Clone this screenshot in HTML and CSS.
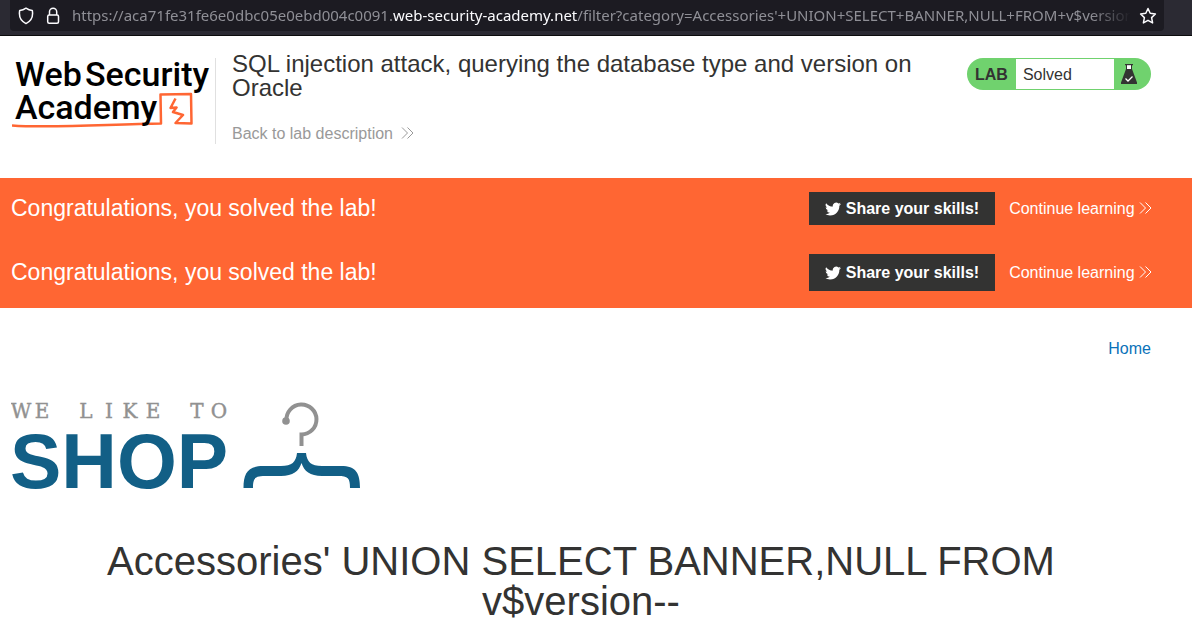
FILE: index.html
```html
<!DOCTYPE html>
<html lang="en">
<head>
<meta charset="utf-8">
<title>SQL injection attack, querying the database type and version on Oracle</title>
<link rel="stylesheet" href="styles.css">
</head>
<body>
<div class="toolbar">
  <div class="urlbar">
    <button class="icon-button" aria-label="Tracking protection"><svg width="16" height="18" viewBox="0 0 16 18"><path d="M8 1.2C10 2.6 12 3.3 14.3 3.5C15.2 8.6 14 13.8 8 16.6C2 13.8.8 8.600 1.700 3.500C4 3.300 6 2.600 8 1.200Z"/></svg></button>
    <button class="icon-button" aria-label="Site information"><svg width="14" height="18" viewBox="0 0 14 18"><rect x="1.700" y="8" width="10.800" height="8.300" rx="1.500"/><path d="M3.500 8V4.800a3.600 3.600 0 0 1 7.200 0V8"/></svg></button>
    <div class="address">https://aca71fe31fe6e0dbc05e0ebd004c0091.<span class="domain">web-security-academy.net</span>/filter?category=Accessories'+UNION+SELECT+BANNER,NULL+FROM+v$version--</div>
    <button class="icon-button" aria-label="Bookmark this page"><svg width="18" height="18" viewBox="0 0 18 18"><path d="M9 1.500L11.200 6.300L16.400 7L12.600 10.600L13.600 15.900L9 13.300L4.400 15.900L5.400 10.600L1.600 7L6.800 6.300Z"/></svg></button>
  </div>
</div>

<header class="lab-header">
  <a class="academy" href="#" aria-label="Web Security Academy">
    <svg width="203" height="86" viewBox="0 0 203 86">
      <path class="scribble" d="M0 67.500C40 70.500 100 66 149 65.500L148.500 36.500L179 36L179.500 65.500L163.500 65L171 57L161 54L164.500 49.500L158.500 50L163.500 40.500"/>
      <text class="wordmark" x="3" y="28">Web</text>
      <text class="wordmark" x="73" y="28">Security</text>
      <text class="wordmark" x="3" y="61">Academy</text>
    </svg>
  </a>
  <div class="lab-title">
    <h2>SQL injection attack, querying the database type and version on Oracle</h2>
    <a class="back" href="#">Back to lab description <svg class="chevrons" width="13" height="12" viewBox="0 0 13 12"><path d="M1 .5L6.500 6L1 11.500M6.500 .5L12 6L6.500 11.500"/></svg></a>
  </div>
  <div class="status">
    <span class="status-label">LAB</span>
    <span class="status-value">Solved</span>
    <svg class="flask" width="18" height="22" viewBox="0 0 18 22"><path fill="#333332" d="M5 1h8v1.200H12V6l5 13.500V21H1v-1.500L6 6V2.200H5z"/><path fill="#fff" d="M7 2.200h4V6H7z"/><path fill="none" stroke="#fff" stroke-width="1.300" d="M5.500 15.500l2.500 2.500 4.500-4.500"/></svg>
  </div>
</header>

<main>
  <section class="banner">
    <div class="notice">
      <p>Congratulations, you solved the lab!</p>
      <button class="share"><svg width="16" height="16" viewBox="0 0 24 24"><path d="M24 4.600a10 10 0 0 1-2.800.8A5 5 0 0 0 23.300 2.700a10 10 0 0 1-3.100 1.200A4.920 4.920 0 0 0 11.800 8.400 14 14 0 0 1 1.700 3.200a4.920 4.920 0 0 0 1.500 6.600 4.900 4.900 0 0 1-2.200-.6v.1a4.920 4.920 0 0 0 3.900 4.800 5 5 0 0 1-2.200.1 4.920 4.920 0 0 0 4.600 3.400A9.870 9.870 0 0 1 0 19.600a14 14 0 0 0 7.500 2.200c9.100 0 14-7.500 14-14v-.6A10 10 0 0 0 24 4.600z"/></svg>Share your skills!</button>
      <a class="continue" href="#">Continue learning <svg class="chevrons" width="13" height="12" viewBox="0 0 13 12"><path d="M1 .5L6.500 6L1 11.500M6.500 .5L12 6L6.500 11.500"/></svg></a>
    </div>
    <div class="notice">
      <p>Congratulations, you solved the lab!</p>
      <button class="share tall"><svg width="16" height="16" viewBox="0 0 24 24"><path d="M24 4.600a10 10 0 0 1-2.800.8A5 5 0 0 0 23.300 2.700a10 10 0 0 1-3.100 1.200A4.920 4.920 0 0 0 11.800 8.400 14 14 0 0 1 1.700 3.200a4.920 4.920 0 0 0 1.500 6.600 4.900 4.900 0 0 1-2.200-.6v.1a4.920 4.920 0 0 0 3.900 4.800 5 5 0 0 1-2.200.1 4.920 4.920 0 0 0 4.600 3.400A9.870 9.870 0 0 1 0 19.600a14 14 0 0 0 7.500 2.200c9.100 0 14-7.500 14-14v-.6A10 10 0 0 0 24 4.600z"/></svg>Share your skills!</button>
      <a class="continue" href="#">Continue learning <svg class="chevrons" width="13" height="12" viewBox="0 0 13 12"><path d="M1 .5L6.500 6L1 11.500M6.500 .5L12 6L6.500 11.500"/></svg></a>
    </div>
  </section>

  <div class="page">
    <nav><a href="#">Home</a></nav>
    <svg class="shop-logo" width="352" height="92" viewBox="0 0 352 92">
      <text class="tagline" y="18" x="10 31 53 75 98 119 142 164 186 208">WE LIKE TO</text>
      <text class="shop" x="-1" y="88">SHOP</text>
      <path class="hook" d="M275.500 20.500A15 15 0 1 1 290.500 34.500V46"/>
      <circle class="knob" cx="275" cy="21" r="3.800"/>
      <path class="hanger" d="M286 53H295C296 62 300 66 311 66H330C345 66 349 73 349 88H339C339 78 337 76 327 76H311C299 76 293 71 290.500 63C288 71 282 76 270 76H254C244 76 242 78 242 88H232.500C232.500 73 237 66 252 66H270C281 66 285 62 286 53Z"/>
    </svg>
    <h1>Accessories' UNION SELECT BANNER,NULL FROM v$version--</h1>
  </div>
</main>
</body>
</html>
```
FILE: styles.css
```css
* { box-sizing: border-box; }

body {
  margin: 0;
  background: #fff;
  color: #333332;
  font-family: "Liberation Sans", Arial, sans-serif;
  font-size: 16px;
}

h1, h2, p { margin: 0; font-weight: 400; }
a { color: inherit; text-decoration: none; }
button { border: 0; font: inherit; cursor: pointer; }

.toolbar {
  height: 36px;
  padding: 0 28px 4px 10px;
  background: #2b2a33;
  border-bottom: 1px solid #0c0c0d;
}

.urlbar {
  display: flex;
  align-items: center;
  height: 31px;
  padding: 0 7px 0 8px;
  border-radius: 0 0 4px 4px;
  background: #1c1b22;
}

.icon-button {
  display: flex;
  padding: 0;
  margin-right: 12px;
  background: none;
}
.icon-button:last-child { margin: 0 0 0 8px; }
.icon-button svg { fill: none; stroke: #fbfbfe; stroke-width: 1.5; stroke-linejoin: round; }

.address {
  flex: 1;
  min-width: 0;
  overflow: hidden;
  white-space: nowrap;
  color: #8f8f96;
  font-family: "Noto Sans", sans-serif;
  font-size: 15px;
  line-height: 22px;
  padding-bottom: 2px;
  -webkit-mask-image: linear-gradient(to left, transparent, #000 40px);
  mask-image: linear-gradient(to left, transparent, #000 40px);
}
.domain { color: #fbfbfe; }

.lab-header {
  display: flex;
  align-items: flex-start;
  padding: 22px 41px 34px 12px;
}
.academy {
  flex: none;
  border-right: 1px solid #e0e0e0;
}
.academy svg { display: block; }
.wordmark { fill: #000; font-family: Roboto, sans-serif; font-size: 34px; font-weight: 500; }
.scribble { fill: none; stroke: #ff6633; stroke-width: 2.5; stroke-linejoin: round; }

.lab-title { flex: 1; padding: 0 50px 0 16px; margin-top: -6px; }
.lab-title h2 { font-size: 24px; line-height: 24px; }
.back { display: inline-block; margin-top: 25px; color: #999; line-height: 18px; }
.chevrons { margin-left: 4px; fill: none; stroke: currentColor; stroke-width: 1; }

.status {
  display: flex;
  align-items: center;
  width: 184px;
  height: 32px;
  padding: 1px 13px 1px 8px;
  border-radius: 16px;
  background: #70d26e;
}
.status-label { padding-top: 2px; font-weight: 700; }
.status-value {
  flex: 1;
  align-self: stretch;
  margin: 0 6px 0 8px;
  padding: 1px 0 0 7px;
  background: #fff;
  line-height: 30px;
}

.banner {
  padding: 0 40px 2px 11px;
  background: #ff6633;
  color: #fff;
}
.notice { display: flex; align-items: center; height: 61px; }
.notice + .notice { height: 67px; }
.notice p { flex: 1; font-size: 23px; }
.share {
  display: flex;
  align-items: center;
  gap: 5px;
  height: 33px;
  padding: 0 16px;
  margin-right: 14px;
  background: #333332;
  color: #fff;
  font-weight: 700;
}
.share.tall { height: 37px; }
.share svg { fill: #fff; }
.continue .chevrons { margin-left: 0; }

.page { padding: 0 41px 0 11px; }
nav { padding: 31px 0 41px; color: #0b72b9; line-height: 20px; text-align: right; }
.shop-logo { display: block; }
.tagline {
  fill: #919191;
  stroke: #919191;
  stroke-width: .4;
  font-family: "DejaVu Serif", serif;
  font-size: 20px;
  text-anchor: middle;
}
.shop { fill: #125f86; font-size: 77px; font-weight: 700; }
.hook { fill: none; stroke: #919191; stroke-width: 4; }
.knob { fill: #919191; }
.hanger { fill: #125f86; }
h1 { margin-top: 49px; font-size: 40px; line-height: 40px; text-align: center; }
```
